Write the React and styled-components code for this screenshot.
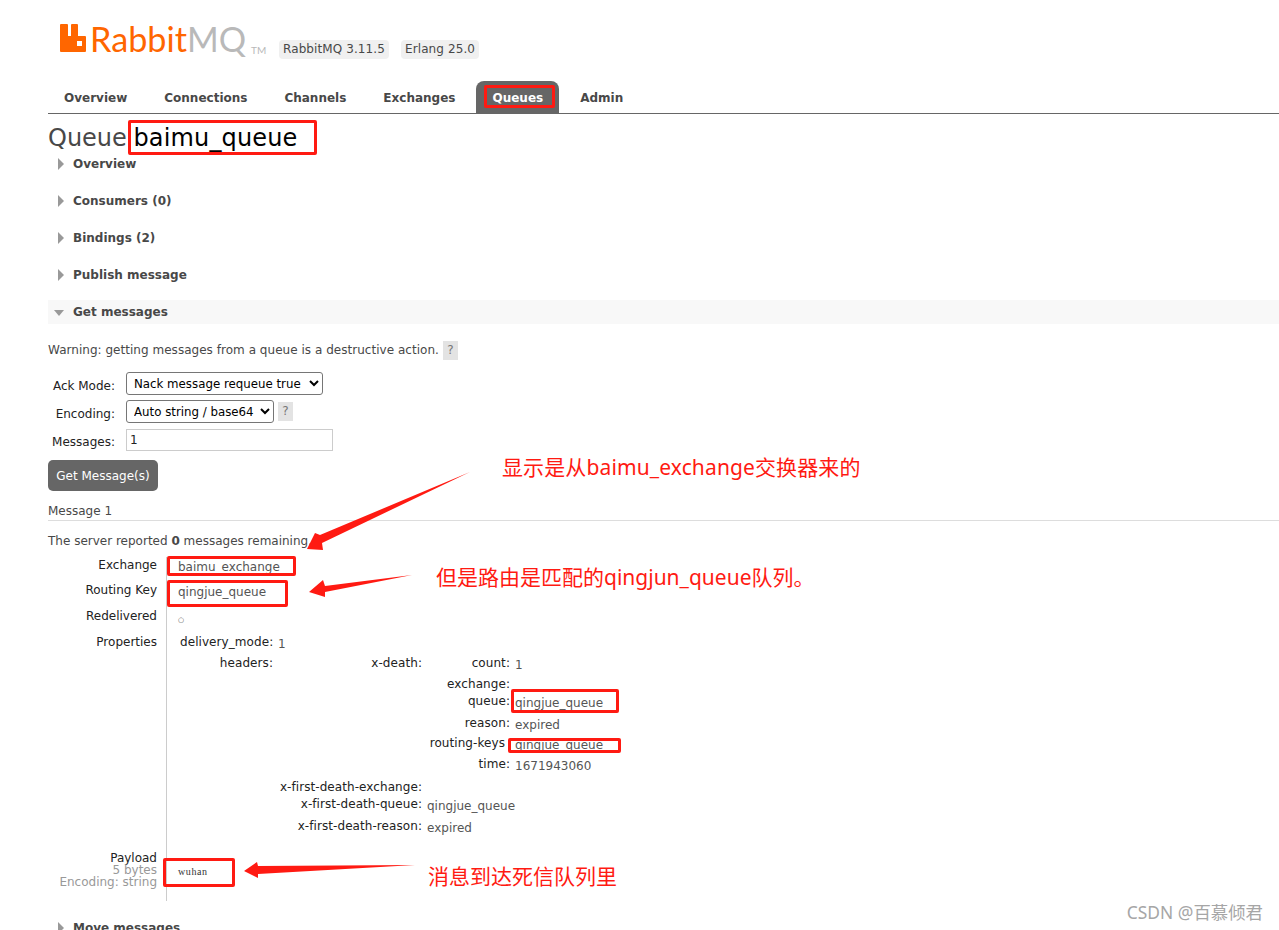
import React from 'react';
import styled, { createGlobalStyle } from 'styled-components';

const GlobalStyle = createGlobalStyle`
  html, body {
    margin: 0;
    padding: 0;
    background: #ffffff;
    overflow: hidden;
  }
  body {
    font-family: "DejaVu Sans", Verdana, sans-serif;
    font-size: 12px;
    color: #484848;
  }
`;

const Page = styled.div`
  position: relative;
  width: 1279px;
  height: 930px;
  overflow: hidden;
  padding-left: 48px;
  box-sizing: border-box;
`;

const Header = styled.header`
  display: flex;
  align-items: flex-start;
  height: 81px;
  padding: 24px 0 0 12px;
  box-sizing: border-box;
`;

const Logo = styled.div`
  display: flex;
  align-items: flex-start;
  width: 219px;
  height: 32px;
  font-family: Lato, "Liberation Sans", Arial, sans-serif;
  font-weight: 400;
  font-size: 34.2px;
  line-height: 30px;
  white-space: nowrap;
`;

const LogoRabbit = styled.span`
  color: #ff6600;
  margin-left: 4px;
`;

const LogoMq = styled.span`
  color: #b9b9b9;
`;

const LogoTm = styled.span`
  color: #b9b9b9;
  font-size: 10px;
  line-height: 9px;
  margin: 22px 0 0 5px;
`;

const Badge = styled.span`
  background: #f0f0f0;
  border-radius: 4px;
  padding: 2px 4px;
  line-height: 15px;
  letter-spacing: 0.1px;
  color: #484848;
  margin: 16px 12px 0 0;
`;

const Nav = styled.nav`
  display: flex;
  gap: 5px;
  height: 32px;
  border-bottom: 1px solid #666666;
`;

const Tab = styled.a`
  display: block;
  padding: 0 16px;
  line-height: 34px;
  font-weight: 700;
  color: ${p => (p.$active ? '#ffffff' : '#484848')};
  background: ${p => (p.$active ? '#666666' : 'transparent')};
  border-radius: 8px 8px 0 0;
`;

const Title = styled.h1`
  margin: 0;
  height: 38px;
  padding-top: 8px;
  box-sizing: border-box;
  font-size: 24px;
  line-height: 32px;
  font-weight: 400;
  color: #484848;
  b {
    font-weight: 400;
    color: #000000;
    margin-left: -1px;
    letter-spacing: 0.15px;
  }
`;

const Section = styled.div`
  display: flex;
  align-items: center;
  gap: 9px;
  height: 24px;
  margin-top: ${p => p.$top || 0}px;
  margin-bottom: 13px;
  padding-left: 10px;
  font-weight: 700;
  color: #484848;
  background: ${p => (p.$open ? '#f8f8f8' : 'transparent')};
`;

const Closed = styled.i`
  width: 0;
  height: 0;
  border-left: 6px solid #999999;
  border-top: 6px solid transparent;
  border-bottom: 6px solid transparent;
`;

const Open = styled.i`
  width: 0;
  height: 0;
  margin-left: -4px;
  margin-top: 2px;
  border-top: 6px solid #999999;
  border-left: 5.5px solid transparent;
  border-right: 5.5px solid transparent;
`;

const Warning = styled.p`
  display: flex;
  align-items: center;
  margin: 0 0 12px;
  padding-top: 3px;
  height: 20px;
  gap: 4px;
  letter-spacing: 0.03px;
`;

const Help = styled.span`
  display: inline-block;
  width: 15px;
  height: 19px;
  line-height: 19px;
  text-align: center;
  background: #e3e3e3;
  color: #777777;
`;

const FormGrid = styled.div`
  display: grid;
  grid-template-columns: 67px auto;
  column-gap: 11px;
  row-gap: 5px;
  justify-content: start;
  align-items: center;
  margin-bottom: 9px;
`;

const FormLabel = styled.label`
  padding-top: 5px;
  text-align: right;
  color: #222222;
`;

const FormField = styled.div`
  display: flex;
  align-items: center;
  gap: 4px;
`;

const Select = styled.select`
  height: 23px;
  padding-left: 3px;
  font-family: "DejaVu Sans", Verdana, sans-serif;
  font-size: 11.8px;
  color: #000000;
  background: #ffffff;
  border: 1px solid #767676;
  border-radius: 3px;
  width: ${p => p.$w}px;
`;

const TextInput = styled.input`
  width: 207px;
  height: 22px;
  margin-top: 1px;
  box-sizing: border-box;
  padding: 0 3px;
  font-family: "DejaVu Sans", Verdana, sans-serif;
  font-size: 12px;
  color: #222222;
  border: 1px solid #cccccc;
`;

const Button = styled.button`
  display: block;
  width: 110px;
  height: 31px;
  padding: 0;
  border: 0;
  border-radius: 5px;
  background: #666666;
  color: #ffffff;
  font-family: "DejaVu Sans", Verdana, sans-serif;
  font-size: 12px;
`;

const MessageTitle = styled.div`
  margin-top: 12px;
  height: 17px;
  line-height: 17px;
  border-bottom: 1px solid #dddddd;
`;

const Remaining = styled.p`
  margin: 12px 0 7px;
  line-height: 17px;
  b {
    font-weight: 700;
  }
`;

const Details = styled.div`
  display: grid;
  grid-template-columns: 109px 1fr;
  column-gap: 9px;
`;

const DetailKey = styled.div`
  height: ${p => p.$h}px;
  text-align: right;
  color: #222222;
  line-height: ${p => p.$line || 16}px;
  padding-top: ${p => p.$top || 0}px;
  box-sizing: border-box;
`;

const KeyNote = styled.div`
  color: #999999;
`;

const DetailValue = styled.div`
  height: ${p => p.$h}px;
  border-left: 1px solid #cccccc;
  padding-left: 11px;
  padding-top: ${p => p.$top || 0}px;
  box-sizing: border-box;
  color: #555555;
  line-height: 16px;
`;

const RedeliveredMark = styled.span`
  font-size: 7px;
`;

const Attrs = styled.div`
  display: grid;
  grid-template-columns: ${p => p.$key}px auto;
  column-gap: 5px;
  justify-content: start;
  margin-left: ${p => p.$left || 0}px;
`;

const AttrKey = styled.div`
  min-height: ${p => p.$h || 0}px;
  text-align: right;
  white-space: nowrap;
  color: #222222;
  line-height: 14px;
  letter-spacing: 0.07px;
  padding-right: ${p => p.$pad || 0}px;
`;

const AttrValue = styled.div`
  min-height: ${p => p.$h || 0}px;
  color: #555555;
  line-height: 14px;
  padding-top: ${p => (p.$nested ? 0 : 2)}px;
  box-sizing: border-box;
`;

const Payload = styled.pre`
  margin: 0;
  font-family: "Liberation Serif", "DejaVu Serif", serif;
  font-size: 10px;
  letter-spacing: 0.6px;
  line-height: 12px;
  color: #333333;
`;

const Overlay = styled.svg`
  position: absolute;
  left: 0;
  top: 0;
  pointer-events: none;
`;

const RedBox = styled.div`
  position: absolute;
  left: ${p => p.$x}px;
  top: ${p => p.$y}px;
  width: ${p => p.$w}px;
  height: ${p => p.$h}px;
  box-sizing: border-box;
  border: 3px solid #ff1a12;
  border-radius: 2px;
`;

const Note = styled.div`
  position: absolute;
  left: ${p => p.$x}px;
  top: ${p => p.$y}px;
  font-family: "Noto Sans", "Noto Sans CJK SC", sans-serif;
  font-size: 21px;
  line-height: 28px;
  letter-spacing: ${p => p.$track || 0}px;
  color: #ff1a12;
  white-space: nowrap;
`;

const Watermark = styled.div`
  position: absolute;
  right: 16px;
  top: 901px;
  font-family: "Noto Sans", "Noto Sans CJK SC", sans-serif;
  font-size: 17.4px;
  line-height: 22px;
  color: #a6a6a6;
`;

const tabs = ['Overview', 'Connections', 'Channels', 'Exchanges', 'Queues', 'Admin'];
const collapsed = ['Overview', 'Consumers (0)', 'Bindings (2)', 'Publish message'];

const boxes = [
  [484, 85, 71, 23],
  [128, 120, 189, 35],
  [167, 556, 129, 20],
  [167, 580, 121, 27],
  [511, 689, 108, 24],
  [508, 738, 113, 15],
  [163, 858, 72, 29],
];

const arrows = [
  '470,472 320,535 315,533 307,549 323,550 322,543',
  '412,575 325,586 323,580 309,592 325,597 325,592',
  '415,865 258,866 257,862 244,871 258,878 258,874',
];

const RabbitMark = () => (
  <svg width="26" height="28" viewBox="0 0 26 28">
    <path
      fill="#ff6600"
      fillRule="evenodd"
      d="M0 1a1 1 0 0 1 1-1h6a1 1 0 0 1 1 1v11h3V1a1 1 0 0 1 1-1h5a1 1 0 0 1 1 1v11h7a1 1 0 0 1 1 1v14a1 1 0 0 1-1 1H1a1 1 0 0 1-1-1zM17 17v5h5v-5z"
    />
  </svg>
);

export default function App() {
  return (
    <Page>
      <GlobalStyle />
      <Header>
        <Logo>
          <RabbitMark />
          <LogoRabbit>Rabbit</LogoRabbit>
          <LogoMq>MQ</LogoMq>
          <LogoTm>TM</LogoTm>
        </Logo>
        <Badge>RabbitMQ 3.11.5</Badge>
        <Badge>Erlang 25.0</Badge>
      </Header>
      <Nav>
        {tabs.map(t => (
          <Tab key={t} $active={t === 'Queues'}>{t}</Tab>
        ))}
      </Nav>
      <Title>Queue <b>baimu_queue</b></Title>
      {collapsed.map(s => (
        <Section key={s}><Closed />{s}</Section>
      ))}
      <Section $open><Open />Get messages</Section>
      <Warning>Warning: getting messages from a queue is a destructive action. <Help>?</Help></Warning>
      <FormGrid>
        <FormLabel>Ack Mode:</FormLabel>
        <FormField>
          <Select $w={197} defaultValue="nack">
            <option value="nack">Nack message requeue true</option>
          </Select>
        </FormField>
        <FormLabel>Encoding:</FormLabel>
        <FormField>
          <Select $w={148} defaultValue="auto">
            <option value="auto">Auto string / base64</option>
          </Select>
          <Help>?</Help>
        </FormField>
        <FormLabel>Messages:</FormLabel>
        <FormField>
          <TextInput defaultValue="1" />
        </FormField>
      </FormGrid>
      <Button>Get Message(s)</Button>
      <MessageTitle>Message 1</MessageTitle>
      <Remaining>The server reported <b>0</b> messages remaining.</Remaining>
      <Details>
        <DetailKey $h={25}>Exchange</DetailKey>
        <DetailValue $h={25} $top={2}>baimu_exchange</DetailValue>
        <DetailKey $h={26}>Routing Key</DetailKey>
        <DetailValue $h={26} $top={2}>qingjue_queue</DetailValue>
        <DetailKey $h={26}>Redelivered</DetailKey>
        <DetailValue $h={26} $top={2}><RedeliveredMark>○</RedeliveredMark></DetailValue>
        <DetailKey $h={216}>Properties</DetailKey>
        <DetailValue $h={216} $top={1}>
          <Attrs $key={93} $left={2}>
            <AttrKey $h={21}>delivery_mode:</AttrKey>
            <AttrValue>1</AttrValue>
            <AttrKey>headers:</AttrKey>
            <AttrValue $nested>
              <Attrs $key={144}>
                <AttrKey>x-death:</AttrKey>
                <AttrValue $nested>
                  <Attrs $key={83}>
                    <AttrKey $h={21}>count:</AttrKey>
                    <AttrValue>1</AttrValue>
                    <AttrKey $h={17}>exchange:</AttrKey>
                    <AttrValue />
                    <AttrKey $h={22}>queue:</AttrKey>
                    <AttrValue>qingjue_queue</AttrValue>
                    <AttrKey $h={20}>reason:</AttrKey>
                    <AttrValue>expired</AttrValue>
                    <AttrKey $h={21} $pad={5}>routing-keys</AttrKey>
                    <AttrValue>qingjue_queue</AttrValue>
                    <AttrKey $h={23}>time:</AttrKey>
                    <AttrValue>1671943060</AttrValue>
                  </Attrs>
                </AttrValue>
                <AttrKey $h={17}>x-first-death-exchange:</AttrKey>
                <AttrValue />
                <AttrKey $h={22}>x-first-death-queue:</AttrKey>
                <AttrValue>qingjue_queue</AttrValue>
                <AttrKey>x-first-death-reason:</AttrKey>
                <AttrValue>expired</AttrValue>
              </Attrs>
            </AttrValue>
          </Attrs>
        </DetailValue>
        <DetailKey $h={51} $line={12} $top={2}>
          Payload
          <KeyNote>5 bytes</KeyNote>
          <KeyNote>Encoding: string</KeyNote>
        </DetailKey>
        <DetailValue $h={51} $top={16}><Payload>wuhan</Payload></DetailValue>
      </Details>
      <Section $top={15}><Closed />Move messages</Section>

      {boxes.map(([x, y, w, h]) => (
        <RedBox key={`${x}-${y}`} $x={x} $y={y} $w={w} $h={h} />
      ))}
      <Overlay width="1279" height="930">
        {arrows.map(points => (
          <polygon key={points} points={points} fill="#ff1a12" />
        ))}
      </Overlay>
      <Note $x={502} $y={453} $track={0.125}>显示是从baimu_exchange交换器来的</Note>
      <Note $x={436} $y={563}>但是路由是匹配的qingjun_queue队列。</Note>
      <Note $x={428} $y={862}>消息到达死信队列里</Note>
      <Watermark>CSDN @百慕倾君</Watermark>
    </Page>
  );
}
